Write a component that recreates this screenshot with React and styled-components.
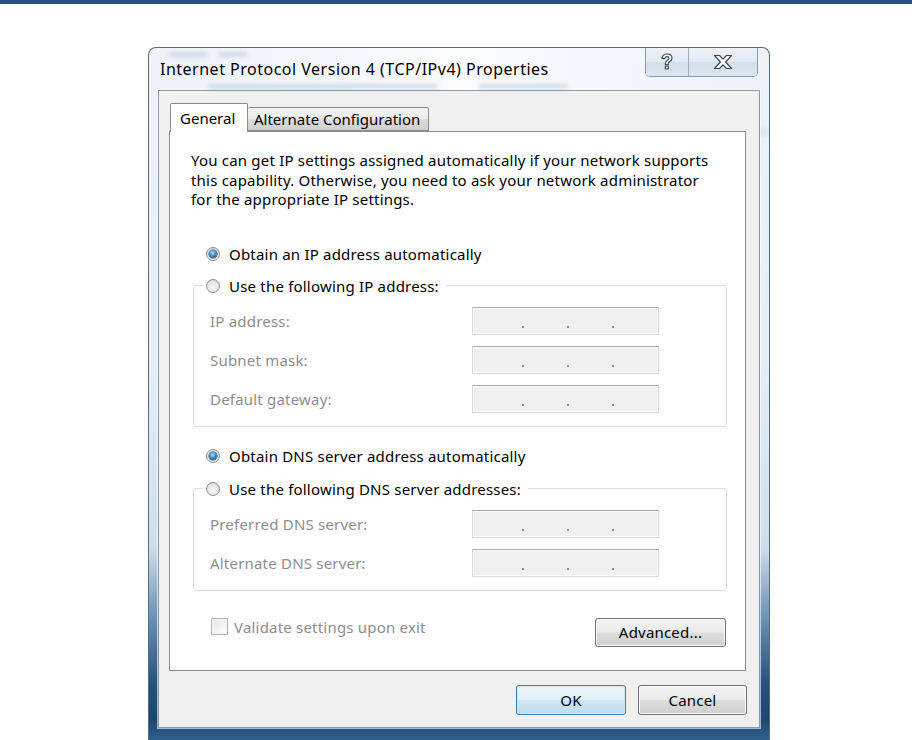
import React from 'react';
import styled, { createGlobalStyle } from 'styled-components';

const GlobalStyle = createGlobalStyle`
  html, body {
    margin: 0;
    background: #ffffff;
  }
  body {
    font-family: "Noto Sans", "DejaVu Sans", sans-serif;
    font-size: 15px;
    letter-spacing: 0.2px;
    color: #000;
  }
`;

const TopBar = styled.div`
  height: 4px;
  background: #28527c;
`;

const Stage = styled.div`
  padding: 43px 0 0 148px;
`;

const Window = styled.div`
  position: relative;
  width: 622px;
  height: 693px;
  box-sizing: border-box;
  border: 1px solid #5b6a78;
  border-bottom: none;
  border-radius: 8px 8px 0 0;
  padding: 0 9px 12px 9px;
  display: flex;
  flex-direction: column;
  background:
    radial-gradient(ellipse 70px 12px at 560px 84px, rgba(70, 100, 130, 0.35), rgba(70, 100, 130, 0) 100%) no-repeat,
    linear-gradient(90deg, rgba(255,255,255,0) 0%, rgba(255,255,255,0.7) 50%, rgba(255,255,255,0) 100%) 0 0 / 100% 75% no-repeat,
    linear-gradient(180deg, #eef3f8 0%, #e6eef6 45%, #cfdeeb 72%, #6f95b8 82%, #24507a 92%, #1d4770 97%, #2f5f8c 100%);
  overflow: hidden;
`;

const TitleBar = styled.div`
  position: relative;
  height: 43px;
  display: flex;
  align-items: flex-start;
`;

const Ghost = styled.div`
  position: absolute;
  left: ${p => p.$x}px;
  top: ${p => p.$y}px;
  width: ${p => p.$w}px;
  height: 5px;
  border-radius: 3px;
  background: rgba(120, 150, 190, 0.28);
  filter: blur(2px);
`;

const Title = styled.div`
  position: relative;
  margin: 11px 0 0 2px;
  font-size: 16px;
  letter-spacing: 0.5px;
  line-height: 20px;
  color: #000;
  white-space: nowrap;
`;

const CaptionButtons = styled.div`
  position: absolute;
  top: 0;
  right: 2px;
  display: flex;
  border: 1px solid #8a9aac;
  border-top: none;
  border-radius: 0 0 5px 5px;
  overflow: hidden;
  box-shadow: inset 0 0 0 1px rgba(255,255,255,0.7);
`;

const CaptionButton = styled.div`
  width: ${p => p.$w}px;
  height: 28px;
  display: flex;
  align-items: center;
  justify-content: center;
  background: linear-gradient(180deg, #edf2f7 0%, #e2eaf2 48%, #d3dee9 52%, #dbe6f0 100%);
  & + & {
    border-left: 1px solid #9eacbb;
  }
`;

const Client = styled.div`
  flex: 1;
  background: #f0f0f0;
  border: 1px solid #8799ab;
  box-shadow: 0 0 0 1px rgba(255,255,255,0.6);
  padding: 12px 13px 12px 10px;
  display: flex;
  flex-direction: column;
`;

const TabStrip = styled.div`
  display: flex;
  align-items: flex-end;
  height: 28px;
  padding-left: 1px;
  position: relative;
  z-index: 1;
`;

const Tab = styled.div`
  box-sizing: border-box;
  width: ${p => p.$w}px;
  height: ${p => (p.$active ? 29 : 24)}px;
  margin-bottom: ${p => (p.$active ? -1 : 0)}px;
  padding: ${p => (p.$active ? '4px 0 0 9px' : '1px 0 0 6px')};
  border: 1px solid #898c95;
  border-bottom: ${p => (p.$active ? 'none' : '1px solid #898c95')};
  border-left: ${p => (p.$active ? '1px solid #898c95' : 'none')};
  border-radius: 2px 2px 0 0;
  background: ${p => (p.$active ? '#ffffff' : 'linear-gradient(180deg, #f3f3f3 0%, #ebebeb 50%, #dddddd 51%, #cfcfcf 100%)')};
  white-space: nowrap;
  line-height: 20px;
  letter-spacing: 0;
`;

const Panel = styled.div`
  height: 540px;
  box-sizing: border-box;
  background: #ffffff;
  border: 1px solid #898c95;
  padding: 19px 19px 0 21px;
  display: flex;
  flex-direction: column;
`;

const Intro = styled.p`
  margin: 0;
  line-height: 19.5px;
  white-space: nowrap;
`;

const Option = styled.label`
  display: flex;
  align-items: center;
  gap: 9px;
  height: 20px;
  margin: ${p => p.$mt || 0}px 0 0 15px;
  white-space: nowrap;
`;

const Radio = styled.span`
  box-sizing: border-box;
  width: 14px;
  height: 14px;
  border-radius: 50%;
  border: 1px solid #8f8f8f;
  background: radial-gradient(circle at 50% 60%, #f7f7f7 0%, #e6e6e6 55%, #d0d0d0 100%);
  display: flex;
  align-items: center;
  justify-content: center;
  flex-shrink: 0;
  &::after {
    content: '';
    display: ${p => (p.$checked ? 'block' : 'none')};
    width: 8px;
    height: 8px;
    border-radius: 50%;
    background: radial-gradient(circle at 45% 35%, #b8e1f8 0%, #3a8bc6 45%, #164e7e 100%);
    box-shadow: 0 0 0 0.5px #1d3f5e;
  }
`;

const Group = styled.fieldset`
  margin: ${p => p.$mt}px 0 0 2px;
  width: 534px;
  height: ${p => p.$h}px;
  box-sizing: border-box;
  border: 1px solid #d5dfe5;
  border-radius: 3px;
  padding: 0 0 0 16px;
  display: flex;
  flex-direction: column;
`;

const Legend = styled.legend`
  margin-left: -7px;
  padding: 0 7px 0 3px;
  display: flex;
  align-items: center;
  gap: 9px;
  white-space: nowrap;
  line-height: 20px;
`;

const FieldRow = styled.div`
  display: flex;
  align-items: center;
  height: 28px;
  margin-top: ${p => p.$mt}px;
`;

const FieldLabel = styled.span`
  width: 262px;
  color: #8d8d8d;
  white-space: nowrap;
`;

const IpBox = styled.div`
  position: relative;
  box-sizing: border-box;
  width: 187px;
  height: 28px;
  background: #f0f0f0;
  border: 1px solid #d9d9d9;
  border-top-color: #a9a9a9;
  box-shadow: inset 0 0 0 1px #fbfbfb;
`;

const Dot = styled.span`
  position: absolute;
  top: 18px;
  left: ${p => p.$x}px;
  width: 2px;
  height: 2px;
  background: #8d89b0;
`;

const BottomRow = styled.div`
  display: flex;
  align-items: flex-start;
  justify-content: space-between;
  margin-top: 27px;
  padding: 0 0 0 20px;
`;

const CheckLabel = styled.label`
  display: flex;
  align-items: center;
  gap: 6px;
  height: 20px;
  margin-top: -1px;
  color: #8d8d8d;
  white-space: nowrap;
`;

const CheckBox = styled.span`
  box-sizing: border-box;
  width: 17px;
  height: 17px;
  border: 1px solid #b4b4b4;
  background: linear-gradient(135deg, #e6e6e6 0%, #f6f6f6 60%, #ffffff 100%);
  box-shadow: inset 0 0 0 1px #f3f3f3;
`;

const Button = styled.div`
  box-sizing: border-box;
  width: ${p => p.$w}px;
  height: ${p => p.$h || 30}px;
  display: flex;
  align-items: center;
  justify-content: center;
  border-radius: 3px;
  border: 1px solid ${p => (p.$default ? '#3c7fb1' : '#707070')};
  box-shadow: inset 0 0 0 1px ${p => (p.$default ? '#c9ecfc' : '#fbfbfb')};
  background: ${p =>
    p.$default
      ? 'linear-gradient(180deg, #edf6fb 0%, #e1eff8 48%, #cfe6f4 52%, #c0dcef 100%)'
      : 'linear-gradient(180deg, #f2f2f2 0%, #ebebeb 48%, #dddddd 52%, #cfcfcf 100%)'};
  color: #000;
`;

const Footer = styled.div`
  display: flex;
  justify-content: flex-end;
  gap: 12px;
  margin: 14px -1px 0 0;
`;

const HelpGlyph = () => (
  <svg width="14" height="18" viewBox="0 0 14 18">
    <path
      d="M2 5.5 C2 2.5 4.5 1 7 1 C10 1 12 2.8 12 5.2 C12 7.4 10.4 8.3 9 9.2 C8.4 9.6 8.3 10 8.3 10.8 L8.3 11.5 L5.4 11.5 L5.4 10.5 C5.4 8.9 6.2 8.1 7.4 7.3 C8.5 6.6 9 6.1 9 5.3 C9 4.3 8.2 3.7 7 3.7 C5.8 3.7 5 4.4 5 5.6 Z M5.4 13 L8.3 13 L8.3 16 L5.4 16 Z"
      fill="#ffffff"
      stroke="#3c4752"
      strokeWidth="1.2"
      strokeLinejoin="round"
    />
  </svg>
);

const CloseGlyph = () => (
  <svg width="20" height="16" viewBox="0 0 20 16">
    <path
      d="M1.5 1.5 L6.5 1.5 L10 5.2 L13.5 1.5 L18.5 1.5 L12.6 8 L18.5 14.5 L13.5 14.5 L10 10.8 L6.5 14.5 L1.5 14.5 L7.4 8 Z"
      fill="#ffffff"
      stroke="#3c4752"
      strokeWidth="1.2"
      strokeLinejoin="round"
    />
  </svg>
);

const IpField = () => (
  <IpBox>
    <Dot $x={49} />
    <Dot $x={94} />
    <Dot $x={139} />
  </IpBox>
);

const App = () => {
  return (
    <>
      <GlobalStyle />
      <TopBar />
      <Stage>
        <Window>
          <TitleBar>
            <Ghost $x={10} $y={4} $w={40} />
            <Ghost $x={60} $y={4} $w={30} />
            <Ghost $x={50} $y={36} $w={230} />
            <Ghost $x={320} $y={36} $w={90} />
            <Title>Internet Protocol Version 4 (TCP/IPv4) Properties</Title>
            <CaptionButtons>
              <CaptionButton $w={42}>
                <HelpGlyph />
              </CaptionButton>
              <CaptionButton $w={68}>
                <CloseGlyph />
              </CaptionButton>
            </CaptionButtons>
          </TitleBar>
          <Client>
            <TabStrip>
              <Tab $active $w={78}>General</Tab>
              <Tab $w={181}>Alternate Configuration</Tab>
            </TabStrip>
            <Panel>
              <Intro>
                You can get IP settings assigned automatically if your network supports
                <br />
                this capability. Otherwise, you need to ask your network administrator
                <br />
                for the appropriate IP settings.
              </Intro>
              <Option $mt={34}>
                <Radio $checked />
                Obtain an IP address automatically
              </Option>
              <Group $mt={12} $h={151}>
                <Legend>
                  <Radio />
                  Use the following IP address:
                </Legend>
                <FieldRow $mt={11}>
                  <FieldLabel>IP address:</FieldLabel>
                  <IpField />
                </FieldRow>
                <FieldRow $mt={11}>
                  <FieldLabel>Subnet mask:</FieldLabel>
                  <IpField />
                </FieldRow>
                <FieldRow $mt={11}>
                  <FieldLabel>Default gateway:</FieldLabel>
                  <IpField />
                </FieldRow>
              </Group>
              <Option $mt={19}>
                <Radio $checked />
                Obtain DNS server address automatically
              </Option>
              <Group $mt={13} $h={112}>
                <Legend>
                  <Radio />
                  Use the following DNS server addresses:
                </Legend>
                <FieldRow $mt={11}>
                  <FieldLabel>Preferred DNS server:</FieldLabel>
                  <IpField />
                </FieldRow>
                <FieldRow $mt={11}>
                  <FieldLabel>Alternate DNS server:</FieldLabel>
                  <IpField />
                </FieldRow>
              </Group>
              <BottomRow>
                <CheckLabel>
                  <CheckBox />
                  Validate settings upon exit
                </CheckLabel>
                <Button $w={131} $h={29}>Advanced...</Button>
              </BottomRow>
            </Panel>
            <Footer>
              <Button $w={110} $default>OK</Button>
              <Button $w={109}>Cancel</Button>
            </Footer>
          </Client>
        </Window>
      </Stage>
    </>
  );
};

export default App;
